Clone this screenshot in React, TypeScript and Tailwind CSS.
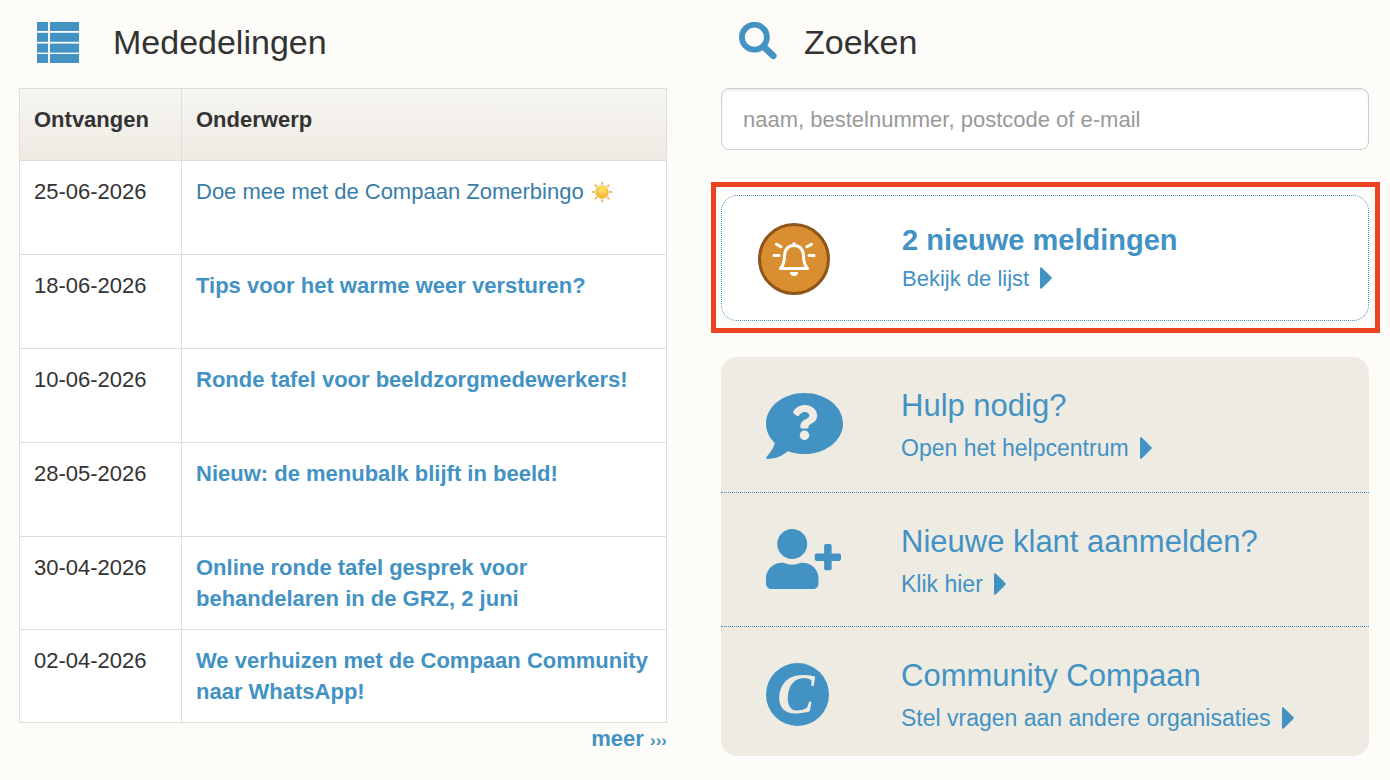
import React from 'react'
import { FaQuestion, FaUserPlus } from 'react-icons/fa'

type Announcement = {
  date: string
  subject: string
  read?: boolean
  sunny?: boolean
}

const announcements: Announcement[] = [
  { date: '25-06-2026', subject: 'Doe mee met de Compaan Zomerbingo', read: true, sunny: true },
  { date: '18-06-2026', subject: 'Tips voor het warme weer versturen?' },
  { date: '10-06-2026', subject: 'Ronde tafel voor beeldzorgmedewerkers!' },
  { date: '28-05-2026', subject: 'Nieuw: de menubalk blijft in beeld!' },
  { date: '30-04-2026', subject: 'Online ronde tafel gesprek voor behandelaren in de GRZ, 2 juni' },
  { date: '02-04-2026', subject: 'We verhuizen met de Compaan Community naar WhatsApp!' }
]

function ListIcon() {
  return (
    <svg viewBox="0 0 42 41" className="h-[41px] w-[42px] shrink-0 fill-[#4392c4]" aria-hidden="true">
      {[0, 10.8, 21.600, 32].map(y => (
        <g key={y}>
          <rect x="0" y={y} width="11" height="9" />
          <rect x="13" y={y} width="29" height="9" />
        </g>
      ))}
    </svg>
  )
}

function SearchIcon() {
  return (
    <svg viewBox="0 0 38 38" className="mb-1 h-[38px] w-[38px] shrink-0" fill="none" stroke="#4392c4" aria-hidden="true">
      <circle cx="15.400" cy="15.200" r="12.500" strokeWidth="5.800" />
      <path d="M24.500 24.500l9.800 9.300" strokeWidth="6.600" strokeLinecap="round" />
    </svg>
  )
}

function SunIcon() {
  return (
    <svg viewBox="0 0 24 24" className="inline-block h-6 w-6 align-[-5px]" role="img" aria-label="zon">
      <defs>
        <radialGradient id="sun" cx="0.5" cy="0.3" r="0.7">
          <stop offset="0" stopColor="#fde768" />
          <stop offset="1" stopColor="#f0ae2c" />
        </radialGradient>
      </defs>
      {[0, 45, 90, 135, 180, 225, 270, 315].map(angle => (
        <path key={angle} d="M12 .6l1.400 4h-2.800z" fill="#e6b266" transform={`rotate(${angle} 12 12)`} />
      ))}
      <circle cx="12" cy="12" r="6.700" fill="url(#sun)" />
    </svg>
  )
}

function BellIcon() {
  return (
    <svg viewBox="0 0 72 72" className="h-[72px] w-[72px]" aria-hidden="true">
      <circle cx="36" cy="36" r="34.5" fill="#d98e32" stroke="#8f5418" strokeWidth="3" />
      <g fill="none" stroke="#fff" strokeWidth="3" strokeLinecap="round" strokeLinejoin="round">
        <path d="M22.500 45.500c3.500-4 4-7 4-12.500c0-6.500 4-10.500 9.500-10.500s9.500 4 9.500 10.500c0 5.500.5 8.500 4 12.500z" />
        <path d="M36 20.500v2M16 32.500h5M51 32.500h5M18.500 21.200l4.500 2.600M53.500 21.200l-4.500 2.600" />
      </g>
      <path d="M32 49h8a4 4 0 0 1-8 0z" fill="#fff" />
    </svg>
  )
}

function HelpIcon() {
  return (
    <svg viewBox="0 0 77 66" className="h-[66px] w-[77px]" aria-hidden="true">
      <path
        d="M38.500 0C17.200 0 0 13.700 0 30.500c0 7.500 3.300 14.300 8.800 19.600C7 56.500 3.500 60.500.6 64c-1 1.200-.5 2 .9 2 8.500 0 15-3.300 20.500-7.700 5 1.900 10.600 2.800 16.500 2.800C59.800 61.100 77 47.400 77 30.500S59.800 0 38.500 0z"
        fill="#4392c4"
      />
      <FaQuestion x="21" y="12" size={35} color="#eeebe3" />
    </svg>
  )
}

function CompaanLogo() {
  return (
    <svg viewBox="0 0 63 63" className="h-[63px] w-[63px]" aria-hidden="true">
      <circle cx="31.500" cy="31.500" r="31.500" fill="#4392c4" />
      <text
        x="30"
        y="50"
        textAnchor="middle"
        fill="#eeebe3"
        className="font-['Liberation_Serif',serif] text-[56px] font-bold italic"
      >
        C
      </text>
    </svg>
  )
}

function Caret() {
  return (
    <svg viewBox="0 0 12 22" className="ml-[11px] inline-block h-[22px] w-3 fill-current align-[-3px]" aria-hidden="true">
      <path d="M0 1.200C0 .2 1 0 1.700.600L11.500 10.300q.7.700 0 1.400L1.700 21.400C1 22 0 21.800 0 20.800z" />
    </svg>
  )
}

const shortcuts = [
  { title: 'Hulp nodig?', action: 'Open het helpcentrum', icon: <HelpIcon /> },
  {
    title: 'Nieuwe klant aanmelden?',
    action: 'Klik hier',
    icon: <FaUserPlus className="h-[60px] w-[75px]" aria-hidden="true" />
  },
  { title: 'Community Compaan', action: 'Stel vragen aan andere organisaties', icon: <CompaanLogo /> }
]

function Announcements() {
  return (
    <section>
      <h2 className="flex h-[88px] items-center gap-[34px] pb-[3px] pl-[18px] text-[34px]">
        <ListIcon />
        Mededelingen
      </h2>
      <table className="w-full table-fixed border-collapse bg-white text-left">
        <thead>
          <tr className="h-[72px] bg-linear-to-b from-[#f7f5f2] to-[#eeebe3] align-top">
            <th className="w-[162px] border border-[#ddd] px-3.5 pt-[15px] font-bold">Ontvangen</th>
            <th className="border border-[#ddd] px-3.5 pt-[15px] font-bold">Onderwerp</th>
          </tr>
        </thead>
        <tbody>
          {announcements.map(item => (
            <tr key={item.date} className={`align-top ${item.subject.length > 40 ? 'h-[93px]' : 'h-[94px]'}`}>
              <td className="border border-[#ddd] px-3.5 py-[15px]">{item.date}</td>
              <td className="border border-[#ddd] px-3.5 py-[15px]">
                <a href="#" className={item.read ? 'text-[#397da8]' : 'font-bold text-[#4392c4]'}>
                  {item.subject}
                  {item.sunny && <> <SunIcon /></>}
                </a>
              </td>
            </tr>
          ))}
        </tbody>
      </table>
      <div className="text-right">
        <a href="#" className="font-bold text-[#4392c4]">
          meer <span className="text-[17px]">›››</span>
        </a>
      </div>
    </section>
  )
}

function Sidebar() {
  return (
    <section>
      <h2 className="flex h-[88px] items-center gap-[27px] pb-[3px] pl-[18px] text-[34px]">
        <SearchIcon />
        <label htmlFor="search">Zoeken</label>
      </h2>
      <input
        id="search"
        type="text"
        placeholder="naam, bestelnummer, postcode of e-mail"
        className="block h-[62px] w-full rounded-lg border border-[#ccc] bg-white px-[21px] pt-0.5 shadow-[inset_0_2px_2px_rgba(0,0,0,0.07)] placeholder:text-[#999]"
      />

      <div className="mt-8 -mr-[11px] -ml-2.5 border-5 border-[#ea4322] pt-2 pr-1.5 pb-[7px] pl-[5px]">
        <a
          href="#"
          className="flex h-[126px] items-center rounded-2xl border border-dotted border-[#4392c4] bg-white pt-0.5 text-[#4392c4]"
        >
          <span className="w-[180px] shrink-0 pl-9">
            <BellIcon />
          </span>
          <span>
            <strong className="block text-[29px] leading-[40px]">2 nieuwe meldingen</strong>
            <span className="block leading-[38px]">
              Bekijk de lijst
              <Caret />
            </span>
          </span>
        </a>
      </div>

      <nav className="mt-6 overflow-hidden rounded-2xl bg-[#eeebe3]">
        {shortcuts.map(item => (
          <a
            key={item.title}
            href="#"
            className="flex border-b border-dotted border-[#4392c4] pt-7 pb-[21px] text-[#4392c4] first:pb-[23px] last:border-b-0 last:pb-[17px]"
          >
            <span className="w-[180px] shrink-0 pt-2 pl-[45px]">{item.icon}</span>
            <span>
              <span className="block text-[31px] leading-[42px]">{item.title}</span>
              <span className="block text-[23px] leading-[42px]">
                {item.action}
                <Caret />
              </span>
            </span>
          </a>
        ))}
      </nav>
    </section>
  )
}

export default function App() {
  return (
    <main className="grid min-h-screen grid-cols-2 gap-[54px] bg-[#fdfcf8] pr-[21px] pb-6 pl-[19px] font-['Liberation_Sans',Arial,sans-serif] text-[22px] leading-[31px] text-[#333]">
      <Announcements />
      <Sidebar />
    </main>
  )
}
